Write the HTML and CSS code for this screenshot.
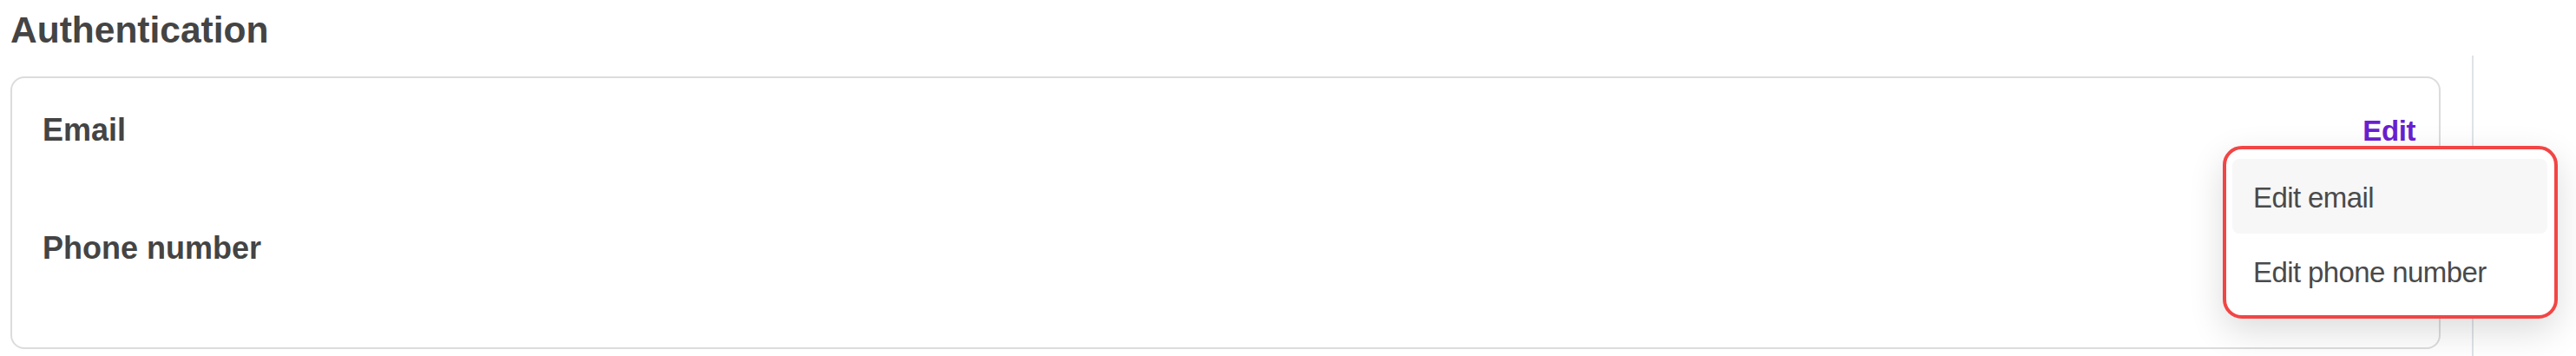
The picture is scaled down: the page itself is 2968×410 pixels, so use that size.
FILE: index.html
```html
<!DOCTYPE html>
<html lang="en">
<head>
  <meta charset="UTF-8">
  <meta name="viewport" content="width=device-width, initial-scale=1.0">
  <title>Authentication</title>
  <link rel="stylesheet" href="styles.css">
</head>
<body>
  <div class="page">
    <section class="content">
      <h2 class="section-title">Authentication</h2>
      <div class="auth-card">
        <div class="auth-row">
          <span class="auth-label">Email</span>
          <a href="#" class="edit-link">Edit</a>
        </div>
        <div class="auth-row">
          <span class="auth-label">Phone number</span>
        </div>

        <!-- menu opened from the Edit link -->
        <div class="edit-menu">
          <button class="menu-item active">Edit email</button>
          <button class="menu-item">Edit phone number</button>
        </div>
      </div>
    </section>
    <aside class="side-rail"></aside>
  </div>
</body>
</html>
```

FILE: styles.css
```css
/* general */
body {
  margin: 0;
  padding: 0;
  background: white;
  font-family: 'Liberation Sans', Arial, sans-serif;
  color: #444;
}

.page {
  display: flex;
  min-height: 410px;
}

.content {
  flex: 1;
  padding-left: 12px;
}

.section-title {
  margin: 10px 0 29px;
  font-size: 42.5px;
  line-height: 49px;
  font-weight: bold;
  color: #444;
}

/* card */
.auth-card {
  position: relative;
  border: 2px solid #dcdcdc;
  border-radius: 16px;
  padding: 40px 27px 94px 35px;
  display: flex;
  flex-direction: column;
  gap: 95px;
}

.auth-row {
  display: flex;
  justify-content: space-between;
  align-items: baseline;
}

.auth-label {
  font-size: 36px;
  line-height: 40px;
  font-weight: bold;
  color: #444;
}

.edit-link {
  font-size: 33px;
  line-height: 40px;
  font-weight: bold;
  letter-spacing: -0.4px;
  color: #6a1fcf;
  text-decoration: none;
}

/* dropdown */
.edit-menu {
  position: absolute;
  top: 78px;
  right: -137px;
  width: 386px;
  box-sizing: border-box;
  padding: 11px 8px 8px 7px;
  background: white;
  border: 4px solid #f24545;
  border-radius: 22px;
  box-shadow: 0 14px 40px rgba(0, 0, 0, 0.14);
  display: flex;
  flex-direction: column;
  z-index: 10;
}

.menu-item {
  display: block;
  text-align: left;
  border: none;
  background: none;
  border-radius: 8px;
  padding: 25px 24px 21px;
  font-family: 'Liberation Sans', Arial, sans-serif;
  font-size: 33px;
  line-height: 40px;
  letter-spacing: -0.6px;
  color: #4a4a4a;
  cursor: pointer;
}

.menu-item.active {
  background: #f7f7f7;
}

/* right rail */
.side-rail {
  width: 118px;
  margin-left: 36px;
  margin-top: 64px;
  border-left: 2px solid #dfe3e8;
}
```
